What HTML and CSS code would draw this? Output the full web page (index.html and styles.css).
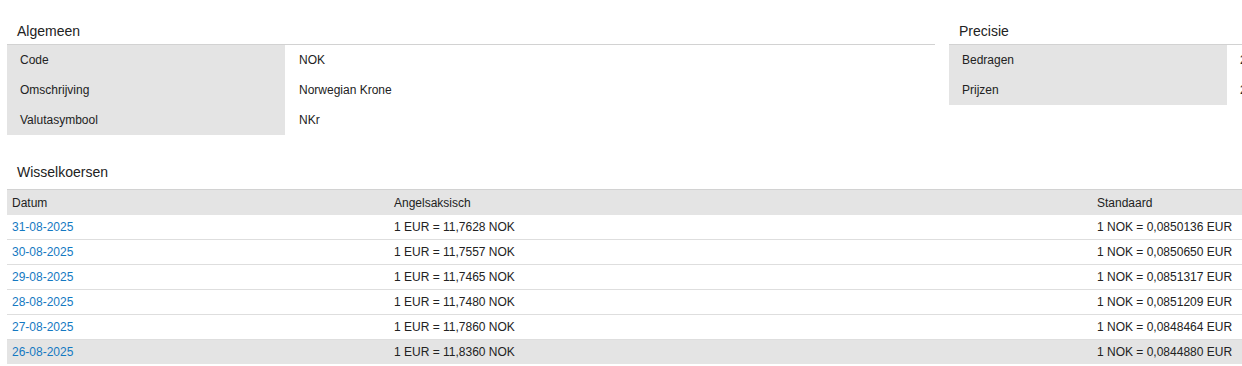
FILE: index.html
```html
<!DOCTYPE html>
<html lang="nl">
<head>
    <meta charset="UTF-8">
    <meta name="viewport" content="width=device-width, initial-scale=1.0">
    <title>Valuta NOK</title>

    <link rel="stylesheet" href="styles.css">
</head>
<body>
    <div class="page">

        <div class="topPanels">
            <div class="panel panelGeneral">
                <div class="panelTitle">Algemeen</div>
                <div class="fieldRow">
                    <div class="fieldLabel">Code</div>
                    <div class="fieldValue">NOK</div>
                </div>
                <div class="fieldRow">
                    <div class="fieldLabel">Omschrijving</div>
                    <div class="fieldValue">Norwegian Krone</div>
                </div>
                <div class="fieldRow">
                    <div class="fieldLabel">Valutasymbool</div>
                    <div class="fieldValue">NKr</div>
                </div>
            </div>

            <div class="panel panelPrecision">
                <div class="panelTitle">Precisie</div>
                <div class="fieldRow">
                    <div class="fieldLabel">Bedragen</div>
                    <div class="fieldValue">2</div>
                </div>
                <div class="fieldRow">
                    <div class="fieldLabel">Prijzen</div>
                    <div class="fieldValue">2</div>
                </div>
            </div>
        </div>

        <div class="panelTitle ratesTitle">Wisselkoersen</div>
        <table class="ratesTable">
            <colgroup>
                <col class="colDate">
                <col class="colAnglo">
                <col class="colStandard">
            </colgroup>
            <thead>
                <tr>
                    <th>Datum</th>
                    <th>Angelsaksisch</th>
                    <th>Standaard</th>
                </tr>
            </thead>
            <tbody>
                <tr>
                    <td><a href="#">31-08-2025</a></td>
                    <td>1 EUR = 11,7628 NOK</td>
                    <td>1 NOK = 0,0850136 EUR</td>
                </tr>
                <tr>
                    <td><a href="#">30-08-2025</a></td>
                    <td>1 EUR = 11,7557 NOK</td>
                    <td>1 NOK = 0,0850650 EUR</td>
                </tr>
                <tr>
                    <td><a href="#">29-08-2025</a></td>
                    <td>1 EUR = 11,7465 NOK</td>
                    <td>1 NOK = 0,0851317 EUR</td>
                </tr>
                <tr>
                    <td><a href="#">28-08-2025</a></td>
                    <td>1 EUR = 11,7480 NOK</td>
                    <td>1 NOK = 0,0851209 EUR</td>
                </tr>
                <tr>
                    <td><a href="#">27-08-2025</a></td>
                    <td>1 EUR = 11,7860 NOK</td>
                    <td>1 NOK = 0,0848464 EUR</td>
                </tr>
                <tr class="hoverRow">
                    <td><a href="#">26-08-2025</a></td>
                    <td>1 EUR = 11,8360 NOK</td>
                    <td>1 NOK = 0,0844880 EUR</td>
                </tr>
            </tbody>
        </table>
    </div>
</body>
</html>
```

FILE: styles.css
```css
body {
    margin: 0;
    font-family: "Liberation Sans", Arial, sans-serif;
    font-size: 12px;
    color: #222;
    background-color: #fff;
    overflow: hidden;
}
.page {
    width: 1242px;
    height: 366px;
    padding-left: 7px;
    box-sizing: border-box;
    overflow: hidden;
}
.topPanels {
    display: flex;
    gap: 14px;
    width: 1400px;
}
.panelGeneral {
    width: 928px;
}
.panelPrecision {
    width: 420px;
}
.panelTitle {
    padding: 21px 10px 3px;
    font-size: 14px;
    line-height: 20px;
    border-bottom: 1px solid #d2d2d2;
}
.fieldRow {
    display: flex;
    height: 30px;
    line-height: 30px;
}
.fieldLabel {
    width: 278px;
    padding-left: 13px;
    box-sizing: border-box;
    background-color: #e4e4e4;
}
.fieldValue {
    flex: 1;
    padding-left: 14px;
}
.panelPrecision .fieldValue {
    padding-left: 13px;
}
.ratesTitle {
    padding: 27px 10px 7px;
    border-bottom: 0;
}
.ratesTable {
    width: 1300px;
    table-layout: fixed;
    border-collapse: collapse;
    border-top: 1px solid #d2d2d2;
}
.colDate {
    width: 382px;
}
.colAnglo {
    width: 703px;
}
.ratesTable th {
    text-align: left;
    font-weight: normal;
    height: 25px;
    padding: 0 5px;
    background-color: #e4e4e4;
}
.ratesTable td {
    height: 24px;
    padding: 0 5px;
    border-bottom: 1px solid #dedede;
}
.ratesTable tr.hoverRow td {
    background-color: #e4e4e4;
    border-bottom: 0;
}
.ratesTable a {
    color: #1479c2;
    text-decoration: none;
}
```
